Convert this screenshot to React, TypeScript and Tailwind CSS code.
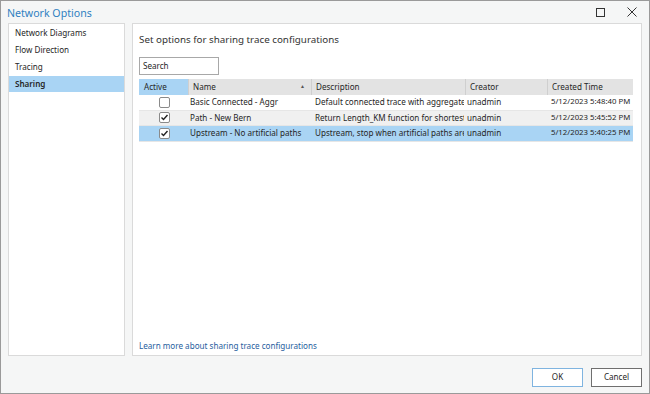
import React from "react";

const font = { fontFamily: '"Noto Sans", "Open Sans", sans-serif' };

function Check({ checked }: { checked: boolean }) {
  return (
    <div className="w-[11px] h-[11px] border border-[#8a8a8a] bg-white rounded-[2px] flex items-center justify-center">
      {checked && (
        <svg width="9" height="9" viewBox="0 0 9 9">
          <path d="M1.5 4.5 L3.5 6.5 L7.5 2" fill="none" stroke="#222" strokeWidth="1.4" />
        </svg>
      )}
    </div>
  );
}

const rows = [
  { checked: false, name: "Basic Connected - Aggr", desc: "Default connected trace with aggregate", creator: "unadmin", time: "5/12/2023 5:48:40 PM", bg: "bg-white" },
  { checked: true, name: "Path - New Bern", desc: "Return Length_KM function for shortest", creator: "unadmin", time: "5/12/2023 5:45:52 PM", bg: "bg-[#f0f0f0]" },
  { checked: true, name: "Upstream - No artificial paths", desc: "Upstream, stop when artificial paths are", creator: "unadmin", time: "5/12/2023 5:40:25 PM", bg: "bg-[#a9d4f4]" },
];

export default function App() {
  return (
    <div style={font} className="w-[650px] h-[394px] bg-[#f5f6f6] border border-[#9a9a9a] flex flex-col text-[8.1px] text-[#262626] overflow-hidden">
      <div className="h-[22px] flex items-center justify-between pl-[6px] pr-[12px] shrink-0">
        <span className="text-[10.6px] text-[#2f7fc1] leading-none mt-[2px]">Network Options</span>
        <div className="flex items-center gap-[22px]">
          <div className="w-[9px] h-[9px] border border-[#333]" />
          <svg width="10" height="10" viewBox="0 0 10 10">
            <path d="M0.5 0.5 L9.5 9.5 M9.5 0.5 L0.5 9.5" stroke="#333" strokeWidth="1" />
          </svg>
        </div>
      </div>
      <div className="flex gap-[7px] px-[7px] h-[333px] shrink-0">
        <div className="w-[118px] bg-white border border-[#dadada] pt-[1px]">
          {["Network Diagrams", "Flow Direction", "Tracing"].map((t) => (
            <div key={t} className="h-[17px] flex items-center pl-[6px]">{t}</div>
          ))}
          <div className="h-[16px] flex items-center pl-[6px] bg-[#a9d4f4] font-semibold">Sharing</div>
        </div>
        <div className="flex-1 bg-white border border-[#dadada] flex flex-col pl-[6px] pr-[8px]">
          <div className="text-[9.8px] text-[#333] mt-[9px] leading-[14px]">Set options for sharing trace configurations</div>
          <div className="mt-[10px] w-[80px] h-[18px] border border-[#a8a8a8] flex items-center pl-[3px]">Search</div>
          <div className="mt-[4px] w-[494px] text-[8.1px]">
            <div className="flex h-[16px] bg-[#e3e3e3] items-center">
              <div className="w-[50px] h-full bg-[#a9d4f4] flex items-center pl-[5px] border-r border-[#cfcfcf]">Active</div>
              <div className="w-[123px] h-full flex items-center justify-between pl-[4px] pr-[6px] border-r border-[#cfcfcf]">
                <span>Name</span>
                <span className="text-[5px] text-[#555]">▲</span>
              </div>
              <div className="w-[154px] h-full flex items-center pl-[4px] border-r border-[#cfcfcf]">Description</div>
              <div className="w-[82px] h-full flex items-center pl-[4px] border-r border-[#cfcfcf]">Creator</div>
              <div className="flex-1 h-full flex items-center pl-[4px]">Created Time</div>
            </div>
            {rows.map((r, i) => (
              <div key={i} className={`flex h-[15.5px] items-center ${r.bg} border-b border-[#e6e6e6]`}>
                <div className="w-[50px] flex justify-center">
                  <Check checked={r.checked} />
                </div>
                <div className="w-[123px] pl-[1px] whitespace-nowrap overflow-hidden">{r.name}</div>
                <div className="w-[152px] mr-[2px] pl-[3px] whitespace-nowrap overflow-hidden">{r.desc}</div>
                <div className="w-[82px] pl-[1px] whitespace-nowrap overflow-hidden">{r.creator}</div>
                <div className="flex-1 pl-[3px] text-[7.8px] whitespace-nowrap overflow-hidden">{r.time}</div>
              </div>
            ))}
          </div>
          <div className="flex-1" />
          <div className="text-[#1f5e9e] mb-[2px] leading-[15px]">Learn more about sharing trace configurations</div>
        </div>
      </div>
      <div className="flex justify-end gap-[8px] pr-[7px] mt-[12px]">
        <div className="w-[51px] h-[19px] border border-[#7fb4e0] bg-white flex items-center justify-center">OK</div>
        <div className="w-[51px] h-[19px] border border-[#6f6f6f] bg-white flex items-center justify-center">Cancel</div>
      </div>
    </div>
  );
}
